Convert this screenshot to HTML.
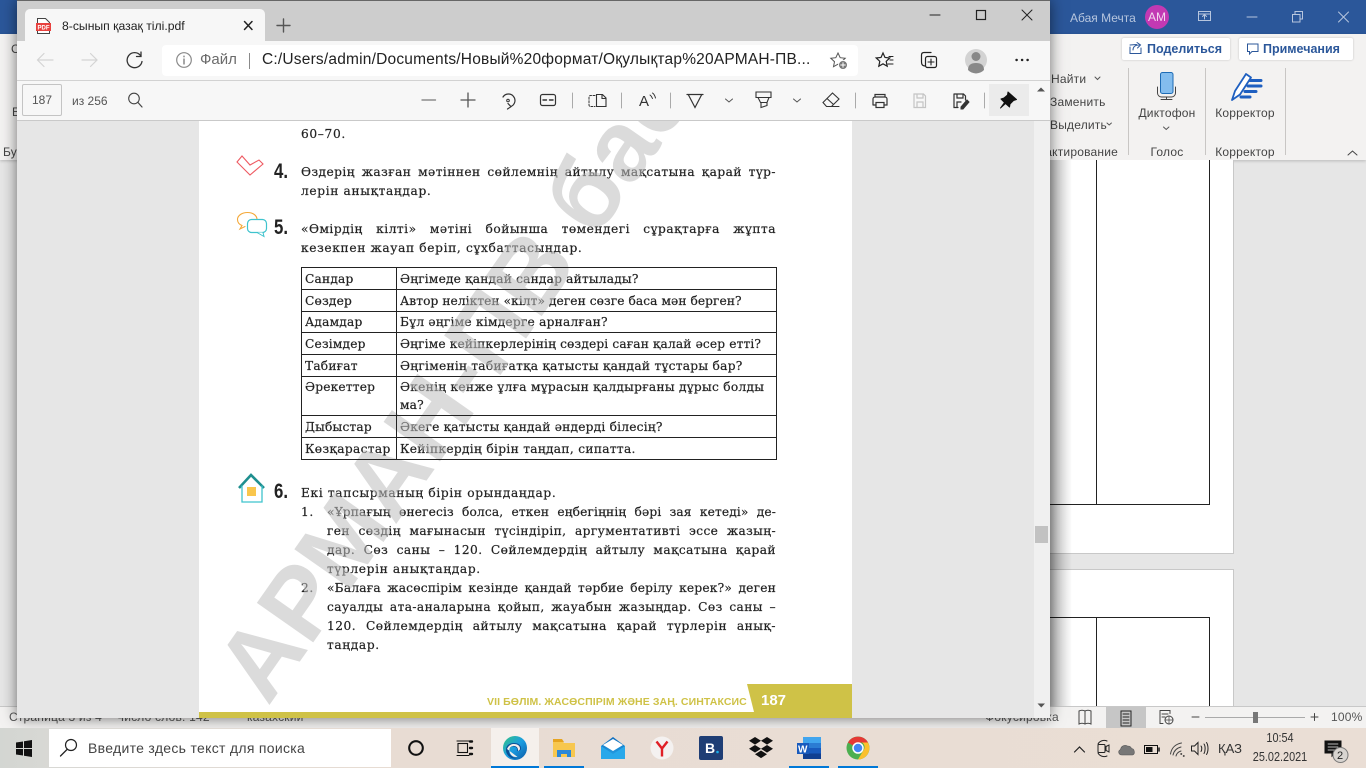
<!DOCTYPE html>
<html lang="ru"><head><meta charset="utf-8"><title>8-сынып қазақ тілі.pdf</title>
<style>
html,body{margin:0;padding:0;width:1366px;height:768px;overflow:hidden;background:#e6e6e6;font-family:"Liberation Sans",sans-serif;color:#333}
.a{position:absolute;white-space:nowrap}
.r{font-size:12px;color:#444;letter-spacing:.2px;line-height:14px}
.c{transform:translateX(-50%)}
#win{position:absolute;left:17px;top:0;width:1033px;height:718px;box-shadow:0 0 14px rgba(0,0,0,.55);background:#e6e6e6;border-top:1px solid #666;box-sizing:border-box;overflow:hidden}
#page{position:absolute;left:182px;top:0;width:653px;height:717px;background:#fff;overflow:hidden}
.p{position:absolute;margin-top:-1px;font-family:"DejaVu Serif","Liberation Serif",serif;font-size:12.2px;color:#222;-webkit-text-stroke:.2px #222;line-height:16px;white-space:nowrap;letter-spacing:.65px}
.q{letter-spacing:.2px}
.j{text-align:justify;text-align-last:justify}
.n{position:absolute;font-weight:bold;font-size:21px;color:#222;line-height:20px;transform:scaleX(.8);transform-origin:0 0}
.t{position:absolute;background:#222;z-index:2}
</style></head><body>

<!-- Word behind -->
<div class="a" style="left:0;top:0;width:1366px;height:34px;background:#2b579a"></div>
<div class="a" style="left:0;top:34px;width:1366px;height:126px;background:#f3f2f1;box-shadow:0 1px 3px rgba(0,0,0,.2)"></div>
<div class="a" style="left:1070px;top:11px;font-size:12px;line-height:14px;color:#b7c6de">Абая Мечта</div>
<div class="a" style="left:1145px;top:5px;width:24px;height:24px;border-radius:50%;background:#c239b3;color:#f3d7ef;font-size:12px;line-height:24px;text-align:center">АМ</div>
<div class="a" style="left:1122px;top:38px;width:108px;height:22px;background:#fff;border-radius:2px;box-shadow:0 0 2px rgba(0,0,0,.2);font-size:12.5px;font-weight:bold;color:#2b579a;line-height:22px;padding-left:25px;box-sizing:border-box">Поделиться</div>
<div class="a" style="left:1239px;top:38px;width:114px;height:22px;background:#fff;border-radius:2px;box-shadow:0 0 2px rgba(0,0,0,.2);font-size:12.5px;font-weight:bold;color:#2b579a;line-height:22px;padding-left:24px;box-sizing:border-box">Примечания</div>
<div class="a r" style="left:1051px;top:72px">Найти</div>
<div class="a r" style="left:1050px;top:95px">Заменить</div>
<div class="a r" style="left:1050px;top:118px">Выделить</div>
<div class="a r" style="left:1000px;top:145px;width:118px;text-align:right">Редактирование</div>
<div class="a r c" style="left:1167px;top:106px">Диктофон</div>
<div class="a r c" style="left:1167px;top:145px">Голос</div>
<div class="a r c" style="left:1245px;top:106px">Корректор</div>
<div class="a r c" style="left:1245px;top:145px">Корректор</div>
<div class="a r" style="left:3px;top:145px">Буфер</div>
<div class="a r" style="left:11px;top:42px">С</div>
<div class="a r" style="left:12px;top:105px">Е</div>
<div class="a" style="left:1128px;top:68px;width:1px;height:87px;background:#c8c6c4"></div>
<div class="a" style="left:1205px;top:68px;width:1px;height:87px;background:#c8c6c4"></div>
<div class="a" style="left:1285px;top:68px;width:1px;height:87px;background:#c8c6c4"></div>

<!-- Word pages -->
<div class="a" style="left:900px;top:160px;width:334px;height:394px;background:#fff;border:solid #c8c8c8;border-width:0 1px 1px 0;box-sizing:border-box"></div>
<div class="a" style="left:900px;top:569px;width:334px;height:137px;background:#fff;border:solid #c8c8c8;border-width:1px 1px 0 0;box-sizing:border-box"></div>
<div class="t" style="left:1096px;top:160px;width:1px;height:344px;z-index:0"></div>
<div class="t" style="left:1209px;top:160px;width:1px;height:345px;z-index:0"></div>
<div class="t" style="left:1000px;top:504px;width:210px;height:1px;z-index:0"></div>
<div class="t" style="left:1000px;top:617px;width:210px;height:1px;z-index:0"></div>
<div class="t" style="left:1096px;top:617px;width:1px;height:89px;z-index:0"></div>
<div class="t" style="left:1209px;top:617px;width:1px;height:89px;z-index:0"></div>

<!-- status bar -->
<div class="a" style="left:0;top:706px;width:1366px;height:22px;background:#f3f2f1;border-top:1px solid #c8c8c8;box-sizing:border-box"></div>
<div class="a" style="left:1106px;top:707px;width:40px;height:21px;background:#c6c6c6"></div>
<div class="a r" style="left:9px;top:710px;color:#555">Страница 3 из 4</div>
<div class="a r" style="left:116px;top:710px;color:#555">Число слов: 142</div>
<div class="a r" style="left:247px;top:710px;color:#555">казахский</div>
<div class="a r" style="left:985px;top:710px;color:#555">Фокусировка</div>
<div class="a r" style="left:1331px;top:710px;color:#555">100%</div>
<div class="a" style="left:1205px;top:717px;width:100px;height:1px;background:#aaa"></div>
<div class="a" style="left:1253px;top:712px;width:5px;height:11px;background:#777"></div>

<!-- Edge window -->
<div id="win">
  <div class="a" style="left:0;top:0;width:1033px;height:40px;background:#cdcdcd"></div>
  <div class="a" style="left:8px;top:8px;width:240px;height:33px;background:#f7f7f7;border-radius:5px 5px 0 0"></div>
  <div class="a" style="left:45px;top:18px;font-size:12.2px;color:#222">8-сынып қазақ тілі.pdf</div>
  <div class="a" style="left:0;top:40px;width:1033px;height:39px;background:#f7f7f7;border-bottom:1px solid #d2d2d2"></div>
  <div class="a" style="left:145px;top:44px;width:696px;height:31px;background:#fff;border-radius:4px"></div>
  <div class="a" style="left:183px;top:50px;font-size:15px;color:#6b6b6b">Файл</div>
  <div class="a" style="left:232px;top:52px;width:1px;height:16px;background:#8a8a8a"></div>
  <div class="a" style="left:245px;top:50px;font-size:15.5px;color:#222;letter-spacing:.2px">C:/Users/admin/Documents/Новый%20формат/Оқулықтар%20АРМАН-ПВ...</div>
  <div class="a" style="left:0;top:80px;width:1033px;height:40px;background:#f7f7f7;border-bottom:1px solid #c9c9c9;box-sizing:border-box"></div>
  <div class="a" style="left:5px;top:83px;width:40px;height:32px;border:1px solid #c4c4c4;border-radius:2px;box-sizing:border-box;font-size:12px;color:#555;text-align:center;line-height:30px">187</div>
  <div class="a" style="left:55px;top:93px;font-size:12px;color:#555">из 256</div>
  <div class="a" style="left:972px;top:83px;width:40px;height:32px;background:#ebebeb"></div>

  <div id="page" style="top:120px;height:597px">
    <div class="p" style="left:102px;top:6px">60–70.</div>
    <div class="n" style="left:75px;top:41px">4.</div>
    <div class="p j" style="left:102px;top:44px;width:475px;letter-spacing:.45px">Өздерің жазған мәтіннен сөйлемнің айтылу мақсатына қарай түр-</div>
    <div class="p" style="left:102px;top:63px">лерін анықтаңдар.</div>
    <div class="n" style="left:75px;top:97px">5.</div>
    <div class="p j" style="left:102px;top:101px;width:475px;letter-spacing:.5px">«Өмірдің кілті» мәтіні бойынша төмендегі сұрақтарға жұпта</div>
    <div class="p" style="left:102px;top:120px">кезекпен жауап беріп, сұхбаттасыңдар.</div>

    <div class="a" style="left:102px;top:146px;width:476px;height:193px;border:1px solid #222;box-sizing:border-box;z-index:2"></div>
    <div class="t" style="left:197px;top:146px;width:1px;height:193px"></div>
    <div class="t" style="left:102px;top:168px;width:476px;height:1px"></div>
    <div class="t" style="left:102px;top:190px;width:476px;height:1px"></div>
    <div class="t" style="left:102px;top:211px;width:476px;height:1px"></div>
    <div class="t" style="left:102px;top:233px;width:476px;height:1px"></div>
    <div class="t" style="left:102px;top:255px;width:476px;height:1px"></div>
    <div class="t" style="left:102px;top:294px;width:476px;height:1px"></div>
    <div class="t" style="left:102px;top:316px;width:476px;height:1px"></div>

    <div class="p q" style="left:106px;top:151px">Сандар</div><div class="p q" style="left:201px;top:151px">Әңгімеде қандай сандар айтылады?</div>
    <div class="p q" style="left:106px;top:173px">Сөздер</div><div class="p" style="left:201px;top:173px;letter-spacing:.08px">Автор неліктен «кілт» деген сөзге баса мән берген?</div>
    <div class="p q" style="left:106px;top:194px">Адамдар</div><div class="p" style="left:201px;top:194px;letter-spacing:.24px">Бұл әңгіме кімдерге арналған?</div>
    <div class="p q" style="left:106px;top:216px">Сезімдер</div><div class="p" style="left:201px;top:216px;letter-spacing:.15px">Әңгіме кейіпкерлерінің сөздері саған қалай әсер етті?</div>
    <div class="p q" style="left:106px;top:238px">Табиғат</div><div class="p" style="left:201px;top:238px;letter-spacing:.28px">Әңгіменің табиғатқа қатысты қандай тұстары бар?</div>
    <div class="p q" style="left:106px;top:259px">Әрекеттер</div><div class="p" style="left:201px;top:259px;letter-spacing:.28px">Әкенің кенже ұлға мұрасын қалдырғаны дұрыс болды</div>
    <div class="p q" style="left:201px;top:277px">ма?</div>
    <div class="p q" style="left:106px;top:299px">Дыбыстар</div><div class="p" style="left:201px;top:299px;letter-spacing:.22px">Әкеге қатысты қандай әндерді білесің?</div>
    <div class="p" style="left:106px;top:321px;letter-spacing:.35px">Көзқарастар</div><div class="p" style="left:201px;top:321px;letter-spacing:.32px">Кейіпкердің бірін таңдап, сипатта.</div>

    <div class="n" style="left:75px;top:361px">6.</div>
    <div class="p" style="left:102px;top:365px">Екі тапсырманың бірін орындаңдар.</div>
    <div class="p" style="left:102px;top:384px">1.</div>
    <div class="p j" style="left:128px;top:384px;width:449px;letter-spacing:.15px">«Ұрпағың өнегесіз болса, еткен еңбегіңнің бәрі зая кетеді» де-</div>
    <div class="p j" style="left:128px;top:403px;width:449px;letter-spacing:.4px">ген сөздің мағынасын түсіндіріп, аргументативті эссе жазың-</div>
    <div class="p j" style="left:128px;top:422px;width:449px;letter-spacing:.45px">дар. Сөз саны – 120. Сөйлемдердің айтылу мақсатына қарай</div>
    <div class="p" style="left:128px;top:441px">түрлерін анықтаңдар.</div>
    <div class="p" style="left:102px;top:460px">2.</div>
    <div class="p j" style="left:128px;top:460px;width:449px;letter-spacing:.22px">«Балаға жасөспірім кезінде қандай тәрбие берілу керек?» деген</div>
    <div class="p j" style="left:128px;top:479px;width:449px;letter-spacing:.4px">сауалды ата-аналарына қойып, жауабын жазыңдар. Сөз саны –</div>
    <div class="p j" style="left:128px;top:498px;width:449px;letter-spacing:.5px">120. Сөйлемдердің айтылу мақсатына қарай түрлерін анық-</div>
    <div class="p" style="left:128px;top:517px">таңдар.</div>

    <svg class="a" style="left:0;top:0;z-index:1" width="653" height="597"><text transform="translate(69,586) rotate(-55)" font-family="Liberation Sans" font-weight="bold" font-size="100" fill="#bebebe" fill-opacity=".55">АРМАН-ПВ баспасы</text></svg>

    <div class="a" style="left:288px;top:575px;font-size:10.5px;font-weight:bold;color:#cfc247;letter-spacing:.1px;z-index:3">VII БӨЛІМ. ЖАСӨСПІРІМ ЖӘНЕ ЗАҢ. СИНТАКСИС</div>
    <svg class="a" style="left:0;top:560px;z-index:3" width="653" height="37"><path d="M548 3H653V37H0V31H555z" fill="#cfc247"/></svg>
    <div class="a" style="left:562px;top:571px;font-size:15px;font-weight:bold;color:#fff;z-index:3">187</div>
  </div>

  <div class="a" style="left:1017px;top:120px;width:16px;height:597px;background:#f0f0f0"></div>
  <div class="a" style="left:1018px;top:525px;width:13px;height:17px;background:#c2c2c2"></div>
</div>
<div class="a" style="left:1050px;top:160px;width:22px;height:546px;background:linear-gradient(90deg,rgba(0,0,0,.28),rgba(0,0,0,0))"></div>

<!-- taskbar -->
<div class="a" style="left:0;top:728px;width:1366px;height:40px;background:linear-gradient(90deg,#d3d6d2 0,#d8d8d4 50px,#e8dcd3 400px,#eaded5 1366px)"></div>
<div class="a" style="left:49px;top:729px;width:342px;height:38px;background:#fff"></div>
<div class="a" style="left:88px;top:740px;font-size:14px;color:#444;letter-spacing:.3px">Введите здесь текст для поиска</div>
<div class="a" style="left:491px;top:728px;width:48px;height:40px;background:#f5f0ec"></div>
<div class="a" style="left:491px;top:766px;width:48px;height:2px;background:#0078d7"></div>
<div class="a" style="left:544px;top:766px;width:40px;height:2px;background:#0078d7"></div>
<div class="a" style="left:789px;top:766px;width:40px;height:2px;background:#0078d7"></div>
<div class="a" style="left:838px;top:766px;width:40px;height:2px;background:#0078d7"></div>
<div class="a" style="left:1218px;top:741px;font-size:13px;color:#333">ҚАЗ</div>
<div class="a" style="left:1280px;top:731px;font-size:12.5px;color:#333;transform:translateX(-50%) scaleX(.87)">10:54</div>
<div class="a" style="left:1280px;top:750px;font-size:12.5px;color:#333;transform:translateX(-50%) scaleX(.87)">25.02.2021</div>

<!-- icon layer -->
<svg class="a" style="left:0;top:0;z-index:5" width="1366" height="768" fill="none" stroke-linecap="round">
  <defs>
    <linearGradient id="eg" x1="0" y1="0" x2="1" y2="1"><stop offset="0" stop-color="#33c481"/><stop offset=".5" stop-color="#1b9de2"/><stop offset="1" stop-color="#0c59a4"/></linearGradient>
    <linearGradient id="mg" x1="0" y1="0" x2="0" y2="1"><stop offset="0" stop-color="#0f6cbd"/><stop offset="1" stop-color="#28a8ea"/></linearGradient>
  </defs>
  <!-- tab -->
  <path d="M37.5 18.5h8l4 4v11h-12z" fill="#fff" stroke="#444"/>
  <rect x="36" y="23" width="15" height="8" fill="#e8413e"/>
  <text x="37.5" y="29.5" font-family="Liberation Sans" font-size="6" font-weight="bold" fill="#fff">PDF</text>
  <path d="M244.5 21.5l7.5 8M252 21.5l-7.5 8" stroke="#222" stroke-width="1.5"/>
  <path d="M277 25.5h13M283.5 19v13" stroke="#555" stroke-width="1.4"/>
  <!-- window -->
  <path d="M930 15h10" stroke="#222" stroke-width="1.1"/>
  <rect x="976.5" y="10.5" width="9" height="9" stroke="#222" stroke-width="1.2"/>
  <path d="M1022 10l10 10M1032 10l-10 10" stroke="#222"/>
  <!-- nav -->
  <path d="M38 60h15M44 53.5l-6.5 6.5 6.5 6.5" stroke="#d4d4d4" stroke-width="1.2"/>
  <path d="M82 60h15M90.5 53.5l6.5 6.5-6.5 6.5" stroke="#d4d4d4" stroke-width="1.2"/>
  <path d="M140.5 55.5a7.5 7.5 0 1 0 1.5 6" stroke="#333" stroke-width="1.3"/>
  <path d="M141 52v4.5h-4.5" stroke="#333" stroke-width="1.3"/>
  <circle cx="184" cy="60" r="7.3" stroke="#8a8a8a" stroke-width="1.2"/>
  <path d="M184 59v5M184 56.2v.6" stroke="#777" stroke-width="1.3"/>
  <!-- star add -->
  <path d="M838 53l2.2 4.7 5 .6-3.7 3.4 1 5-4.5-2.5-4.5 2.5 1-5-3.7-3.4 5-.6z" stroke="#555"/>
  <circle cx="843" cy="65" r="4.5" fill="#777" stroke="#fff"/>
  <path d="M843 62.7v4.6M840.7 65h4.6" stroke="#fff"/>
  <!-- favorites -->
  <path d="M883 53l2 4.5 4.8.5-3.6 3.3 1 4.9-4.2-2.4-4.2 2.4 1-4.9-3.6-3.3 4.8-.5z" stroke="#222" stroke-width="1.2"/>
  <path d="M889 56.500h4M890 60h3M888 64h5" stroke="#222" stroke-width="1.1"/>
  <!-- collections -->
  <path d="M925 66c-3 0-3.500-2-3.500-4v-7c0-1.500 1-2.500 2.500-2.500h7" stroke="#222" stroke-width="1.2"/>
  <rect x="925.500" y="56.500" width="11" height="11" rx="2" stroke="#222" stroke-width="1.2"/>
  <path d="M931 59v6M928 62h6" stroke="#222" stroke-width="1.1"/>
  <!-- avatar -->
  <circle cx="976" cy="60" r="11" fill="#d3d3d3"/>
  <circle cx="976" cy="56.500" r="4.500" fill="#888"/>
  <path d="M968 70c0-5 3-7 8-7s8 2 8 7a11 11 0 0 1-16 0z" fill="#888"/>
  <path d="M1016.500 60h.2M1022 60h.2M1027.500 60h.2" stroke="#222" stroke-width="2.400"/>
  <!-- pdf toolbar -->
  <circle cx="134" cy="98.500" r="5.300" stroke="#444" stroke-width="1.100"/>
  <path d="M138 102.500l4 4.500" stroke="#444" stroke-width="1.200"/>
  <path d="M422 100h13.500" stroke="#777" stroke-width="1.300"/>
  <path d="M461 100h14M468 93v14" stroke="#555" stroke-width="1.300"/>
  <path d="M503 97a6.500 6.500 0 1 1 8 9.500M508 103.500l3 3.200-3.500 2.300" stroke="#333" stroke-width="1.200"/>
  <circle cx="508" cy="100.500" r="1.300" stroke="#333"/>
  <rect x="540.500" y="94.500" width="15" height="11" rx="2" stroke="#333" stroke-width="1.200"/>
  <path d="M543 100h3.500M553 100h-3.500" stroke="#333" stroke-width="1.400"/>
  <path d="M572.500 93v15M621.500 93v15M670.500 93v15M855.500 93v15M984.500 93v15" stroke="#aaa"/>
  <path d="M595 95.500h-4.500a1.500 1.500 0 0 0-1.500 1.500v8a1.500 1.500 0 0 0 1.500 1.500h4.500" stroke="#333" stroke-dasharray="2 1.500"/>
  <path d="M596.500 94.500h6l3.500 3.500v8.500h-9.500zM602 94.500v4h4" stroke="#333" stroke-width="1.100"/>
  <text x="639" y="106" font-family="Liberation Sans" font-size="15" fill="#333">A</text>
  <path d="M650 95c1.500 1 2 2 2.500 3.500M652.500 93c1.500 1 2.500 3 3 5" stroke="#333"/>
  <path d="M687 94.500h16M688.500 95l6.500 12.500 6.500-12.500" stroke="#333" stroke-width="1.200"/>
  <path d="M725.500 99l3.500 3 3.500-3M793.500 99l3.500 3 3.500-3" stroke="#555"/>
  <path d="M756 92h15v5.500h-15zM758 97.500l2.500 5h6.500l2-5M761 102.500v5l6-2v-3" stroke="#333" stroke-width="1.100"/>
  <path d="M823 102.500l9.500-9.500 6.500 6-7.500 7.500h-5zM827 98.500l6.500 6M827 106.500h12" stroke="#333" stroke-width="1.100"/>
  <path d="M875 97v-2.500h10V97M873 105v-6a2 2 0 0 1 2-2h10a2 2 0 0 1 2 2v6h-3M876 105h-3" stroke="#333" stroke-width="1.200"/>
  <rect x="876" y="102.500" width="8" height="5" stroke="#333" stroke-width="1.200"/>
  <path d="M914 94h9.500l2 2v11.500h-11.500zM917 94v4h6v-4M917 107v-5h6v5" stroke="#c4c4c4" stroke-width="1.200"/>
  <path d="M954 94h9.500l2 2v4M954 94v13.500h4M957 94v4h6v-4M957 107v-5h4" stroke="#333" stroke-width="1.200"/>
  <path d="M961 107l6-7 2 2-6 7h-2z" fill="#333" stroke="#333"/>
  <path d="M1008 92l8.500 7.500-3 1-3.500 3.500-.5 3-4-3.500-5 4.500 4-5.500-3.500-3.500 3-1 3.500-3z" fill="#111" stroke="#111" stroke-linejoin="round"/>
  <path d="M1037 91.500l4-4 4 4z" fill="#555"/>
  <path d="M1037.500 703.500h7.500l-3.700 4z" fill="#555"/>
  <!-- word title -->
  <path d="M1198.500 11.500h12v9h-12zM1198.500 14h12M1204.500 19v-4M1202.500 16.500l2-2 2 2" stroke="#b7c6de"/>
  <path d="M1247 17h10" stroke="#b7c6de"/>
  <path d="M1292.500 14.500h7.500v7.500h-7.500zM1295 14v-2.500h7.500v7.500h-2.500" stroke="#b7c6de"/>
  <path d="M1338.500 12l10 10M1348.500 12l-10 10" stroke="#b7c6de"/>
  <path d="M1130 47v6.500h11V48M1130 45l6.500-.5M1133 50c0-3 2-5 6-5M1137 42.500l3.500 2.500-3 3" stroke="#2b579a"/>
  <path d="M1247.500 44h10.500v7.500h-6l-2.500 2.500v-2.500h-2z" stroke="#2b579a"/>
  <path d="M1095 77l2.500 2.500 2.500-2.500M1107 123l2.200 2 2.200-2" stroke="#555"/>
  <!-- mic -->
  <rect x="1160.500" y="72.500" width="12.500" height="21" rx="2" fill="#83bdee" stroke="#1e6cb5"/>
  <path d="M1157.500 87v6a4 4 0 0 0 4 4h10a4 4 0 0 0 4-4v-6M1166.500 97v2.500M1161 99.500h11" stroke="#444"/>
  <path d="M1163.500 127l2.700 2.500 2.700-2.500" stroke="#555"/>
  <!-- corrector -->
  <path d="M1232 100l3-9 11-17 5 3.500-11 17z" fill="#fff" stroke="#1e5fc0" stroke-width="1.800" stroke-linejoin="round"/>
  <path d="M1250 80.500h11M1248 86h13M1245 91.500h11M1241 97h9" stroke="#1e5fc0" stroke-width="3"/>
  <path d="M1348 155l4.500-4 4.500 4" stroke="#444"/>
  <!-- status icons -->
  <path d="M1085 711c-2-1-4-1-6 0v13c2-1 4-1 6 0 2-1 4-1 6 0v-13c-2-1-4-1-6 0zM1085 711v13" stroke="#444"/>
  <path d="M1121 711h10v15h-10zM1123 714h6M1123 717h6M1123 720h6M1123 723h6" stroke="#222"/>
  <path d="M1160 710.500h10v3M1160 710.500v13h3M1162 714h6M1162 717h3" stroke="#444"/>
  <circle cx="1169" cy="720" r="4" stroke="#444"/>
  <path d="M1165 720h8M1169 716v8" stroke="#444" stroke-width=".7"/>
  <path d="M1192 717h7M1311 717h7M1314.500 713.500v7" stroke="#444"/>
  <!-- taskbar left -->
  <path d="M16 742.500l7-1v6.500h-7zM24 741.300l8-1.300v8h-8zM16 749h7v6.500l-7-1zM24 749h8v8l-8-1.300z" fill="#111"/>
  <circle cx="71" cy="745" r="5.500" stroke="#222" stroke-width="1.200"/>
  <path d="M67 749.500l-6.500 6.500" stroke="#222" stroke-width="1.300"/>
  <circle cx="416" cy="748" r="6.800" stroke="#111" stroke-width="2.100"/>
  <rect x="458" y="743.500" width="9.500" height="9" stroke="#111" stroke-width="1.100"/>
  <path d="M457 741h12M457 755.500h12" stroke="#111" stroke-width="1.100"/>
  <path d="M470 741.500h2M470 748h2M470 754h2" stroke="#111" stroke-width="2.400"/>
  <!-- edge -->
  <circle cx="515" cy="748" r="12" fill="url(#eg)"/>
  <path d="M506 750c0-5 4-7 8-7s7 2 7 5-2 3-4 3c2-5-8-7-8 0 0 3 3 7 8 7-6 2-11-3-11-8z" fill="#0b4f96"/>
  <path d="M507 749c1.500-3.500 4-5 7-5s6 1.500 6 4.500c0 1.500-1 2-2 2.500 .5-4-3-5.500-5-5s-4 1.500-3.500 5 3 6.500 8 6" fill="#f5f0ec"/>
  <!-- folder -->
  <path d="M553 740h9l2 3h11v14h-22z" fill="#f7c74f"/>
  <path d="M553 739h9l2 3h-11z" fill="#e6a420"/>
  <rect x="557" y="750" width="14" height="2.500" fill="#2b88d8"/>
  <path d="M557 757v-5h14v5h-4v-3h-6v3z" fill="#2b88d8"/>
  <!-- mail -->
  <path d="M601 746l12-9 12 9v13h-24z" fill="url(#mg)"/>
  <path d="M603 745l10-6 10 6-10 6z" fill="#fff"/>
  <path d="M601 746l12 8 12-8v13h-24z" fill="#28a8ea"/>
  <!-- yandex -->
  <circle cx="662" cy="748" r="11.500" fill="#f4f1f0"/>
  <path d="M656.500 741.500l5.500 7 5.500-7M662 748.500v8" stroke="#e01f26" stroke-width="2.400" stroke-linecap="butt"/>
  <!-- booking -->
  <rect x="699" y="736" width="24" height="24" rx="2" fill="#1f3e75"/>
  <text x="705" y="753" font-family="Liberation Sans" font-size="14" font-weight="bold" fill="#fff">B</text>
  <circle cx="717.500" cy="752" r="1.300" fill="#1ab0ec"/>
  <!-- dropbox -->
  <path d="M755 737l6 3.800-6 3.800-6-3.800zM767 737l6 3.800-6 3.800-6-3.800zM755 745l6 3.800-6 3.800-6-3.800zM767 745l6 3.800-6 3.800-6-3.800zM761 750.500l6 3.800-6 3.800-6-3.800z" fill="#111"/>
  <!-- word -->
  <rect x="803" y="737" width="18" height="22" rx="1" fill="#2b7cd3"/>
  <rect x="803" y="737" width="18" height="6" fill="#41a5ee"/>
  <rect x="803" y="748" width="18" height="5.500" fill="#185abd"/>
  <rect x="803" y="753.500" width="18" height="5.500" fill="#103f91"/>
  <rect x="797" y="743" width="12" height="11" fill="#185abd"/>
  <text x="798" y="752.500" font-family="Liberation Sans" font-size="10" font-weight="bold" fill="#fff">W</text>
  <!-- chrome -->
  <circle cx="858" cy="748" r="11.500" fill="#4caf50"/>
  <path d="M848 742.500a11.500 11.500 0 0 1 20 0h-10a5.500 5.500 0 0 0-5 3z" fill="#e53935"/>
  <path d="M868 742.500a11.500 11.500 0 0 1-10 17l5-8.500a5.500 5.500 0 0 0-1-8.500z" fill="#fbc02d"/>
  <circle cx="858" cy="748" r="5" fill="#4285f4" stroke="#fff" stroke-width="1.500"/>
  <!-- tray -->
  <path d="M1074.500 752l5-5 5 5" stroke="#222" stroke-width="1.200"/>
  <path d="M1098 744a7 7 0 0 1 9-3M1098 753a7 7 0 0 0 9 3" stroke="#222"/>
  <rect x="1098" y="744.500" width="7" height="8" rx="1" stroke="#222"/>
  <path d="M1106 746.500l3-1.500v7l-3-1.500z" stroke="#222"/>
  <path d="M1122 755c-3.500 0-4.500-4-1.500-5.500 .5-3.500 4-5 7-3.500 2 0 3.500 1 4 2.500 3 0 4 5.500 1 6.500z" fill="#777" stroke="#555" stroke-width=".6"/>
  <rect x="1144.500" y="745.500" width="13" height="8" stroke="#111"/>
  <rect x="1146" y="747" width="6.500" height="5" fill="#111"/>
  <path d="M1159 748v3" stroke="#111" stroke-width="1.500"/>
  <path d="M1170.500 754c1-6 5-10 11-11M1173 755c1-4 3.500-7 8-8M1176 756c.5-2.500 2-4 5-5" stroke="#444"/>
  <path d="M1181 754h.5M1183.500 756h.5" stroke="#222" stroke-width="1.400"/>
  <path d="M1191.500 746v5h3l3.500 3.500v-12l-3.500 3.500zM1201 746c1 1 1 4 0 5.500M1204 744c1.500 2 1.500 7 0 9.500M1206.500 742.500c2 3 2 9 0 12" stroke="#222"/>
  <path d="M1325 741h16v12h-6l-3 3v-3h-7z" fill="#111" stroke="#111"/>
  <path d="M1328 744h10M1328 747h10M1328 750h7" stroke="#eee" stroke-width=".8"/>
  <circle cx="1340.500" cy="755" r="7.500" fill="#d8d4d0" stroke="#777"/>
  <text x="1337" y="759" font-family="Liberation Sans" font-size="11" fill="#222">2</text>
  <!-- page icons -->
  <path d="M237 162l5-6 8 9 9-5 4 4-13 11z" stroke="#ee5a62" stroke-width="1.100" stroke-linejoin="miter"/>
  <path d="M252 226c3-1 5-3 5-6.500 0-4-4-7-9.500-7s-10 3-10 7c0 3 2 5 4.500 6l-2 3.500 5-2.500" stroke="#f4a93a" stroke-width="1.100"/>
  <rect x="247.500" y="219.500" width="19" height="13" rx="4" fill="#fff" stroke="#3fc3cd" stroke-width="1.200"/>
  <path d="M257 232.500l7 4-1-4" fill="#fff" stroke="#3fc3cd" stroke-width="1"/>
  <path d="M239 488l12-13 13 13" stroke="#1f8f8f" stroke-width="2.600" stroke-linecap="butt"/>
  <path d="M242 486v16h20v-16" stroke="#3fc3cd" stroke-width="1.300"/>
  <rect x="247" y="487" width="9" height="9" fill="#f9c64d"/>
</svg>
</body></html>
